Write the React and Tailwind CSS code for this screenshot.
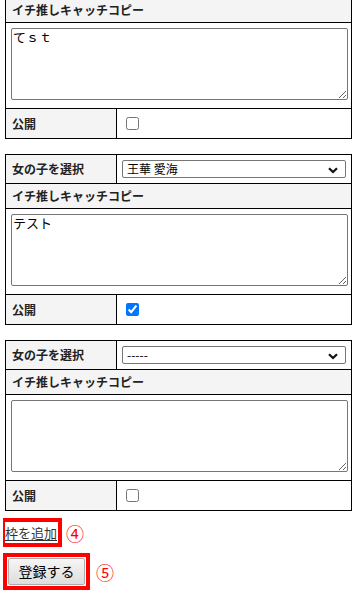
import React from "react";

const font = { fontFamily: '"Noto Sans CJK JP", "Noto Sans", sans-serif' };

function Chevron() {
  return (
    <svg width="10" height="7" viewBox="0 0 10 7" className="absolute right-[7px] top-[6px]">
      <path d="M1 1.2 L5 5 L9 1.2" fill="none" stroke="#111" strokeWidth="2.2" />
    </svg>
  );
}

function SelectRow({ value }) {
  return (
    <div className="grid grid-cols-[110px_1fr] border-b border-black">
      <div className="flex h-[28px] items-center bg-[#f4f4f4] pl-[6px] text-[12px] font-bold text-[#222]">
        女の子を選択
      </div>
      <div className="flex items-center border-l border-black pl-[5px]">
        <div className="relative h-[18px] w-[224px] rounded-[2px] border border-[#767676] bg-white">
          <span className="block pl-[4px] text-[12px] leading-[16px] text-black">{value}</span>
          <Chevron />
        </div>
      </div>
    </div>
  );
}

function FormTable({ withSelect, selectValue, text, checked, className }) {
  return (
    <div className={"w-[347px] border border-black " + className}>
      {withSelect && <SelectRow value={selectValue} />}
      <div className="flex h-[25px] items-center border-b border-black bg-[#f4f4f4] pl-[6px] text-[12px] font-bold text-[#222]">
        イチ推しキャッチコピー
      </div>
      <div className="border-b border-black pb-[8px] pl-[5px] pt-[5px]">
        <textarea
          defaultValue={text}
          className="block h-[72px] w-[337px] resize rounded-[2px] border border-[#767676] bg-white px-[1px] py-0 text-[13px] leading-[16px] text-black"
        />
      </div>
      <div className="grid grid-cols-[110px_1fr]">
        <div className="flex h-[29px] items-center bg-[#f4f4f4] pl-[6px] text-[12px] font-bold text-[#222]">
          公開
        </div>
        <div className="flex items-center border-l border-black pl-[5px]">
          <input type="checkbox" defaultChecked={checked} className="m-[3px] ml-[4px] h-[13px] w-[13px]" />
        </div>
      </div>
    </div>
  );
}

export default function App() {
  return (
    <div className="h-[606px] w-[364px] overflow-hidden bg-white" style={font}>
      <div className="pl-[5px]">
        <FormTable className="-mt-[3px]" text="てｓｔ" checked={false} />
        <FormTable className="mt-[15px]" withSelect selectValue="王華 愛海" text="テスト" checked />
        <FormTable className="mt-[15px]" withSelect selectValue="-----" text="" checked={false} />
      </div>

      <div className="mt-[7px] flex items-center pl-[3px]">
        <div className="flex h-[29px] w-[59px] items-center border-[4px] border-l-[2px] border-[#ff0000]">
          <a href="#" className="text-[13px] leading-none text-[#333] underline underline-offset-2">
            枠を追加
          </a>
        </div>
        <span className="ml-[4px] text-[18px] leading-none text-[#ff0000]">④</span>
      </div>

      <div className="mt-[6px] flex items-center pl-[3px]">
        <div className="flex h-[37px] w-[87px] items-center justify-center border-[4px] border-[#ff0000]">
          <button className="h-[27px] w-[77px] rounded-[2px] border border-[#adadad] bg-gradient-to-b from-[#f6f6f6] to-[#dddddd] text-[14px] text-black">
            登録する
          </button>
        </div>
        <span className="ml-[6px] text-[18px] leading-none text-[#ff0000]">⑤</span>
      </div>
    </div>
  );
}
